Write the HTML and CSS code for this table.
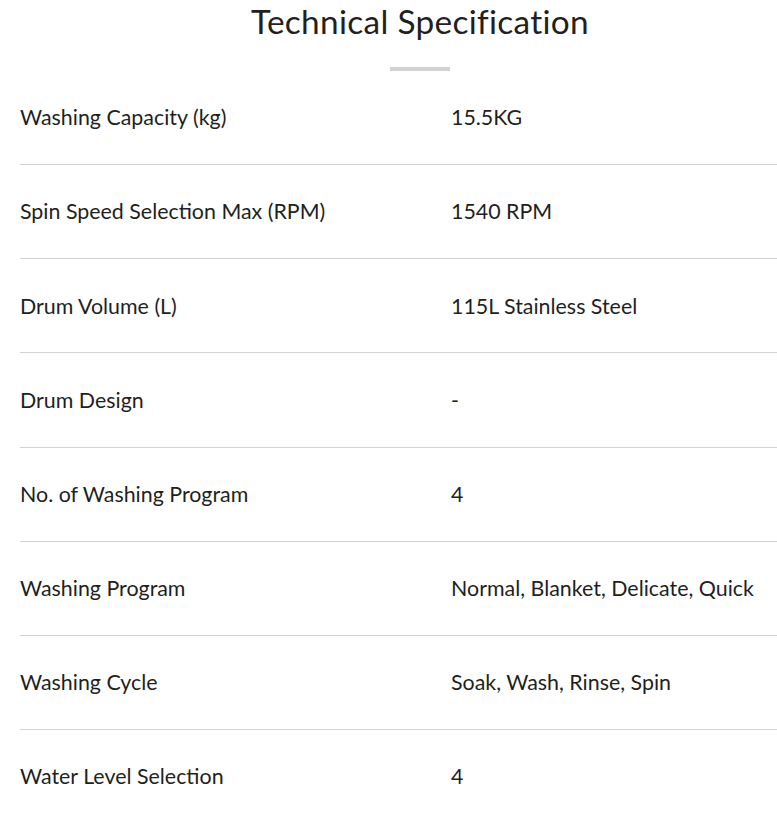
FILE: index.html
```html
<!DOCTYPE html>
<html>
<head>
<meta charset="utf-8">
<link rel="stylesheet" href="styles.css">
</head>
<body>
<section class="spec">
  <h2 class="spec-title">Technical Specification</h2>
  <div class="spec-bar"></div>
  <div class="spec-table">
    <div class="spec-row"><div class="spec-label">Washing Capacity (kg)</div><div class="spec-value">15.5KG</div></div>
    <div class="spec-row"><div class="spec-label">Spin Speed Selection Max (RPM)</div><div class="spec-value">1540 RPM</div></div>
    <div class="spec-row"><div class="spec-label">Drum Volume (L)</div><div class="spec-value">115L Stainless Steel</div></div>
    <div class="spec-row"><div class="spec-label">Drum Design</div><div class="spec-value">-</div></div>
    <div class="spec-row"><div class="spec-label">No. of Washing Program</div><div class="spec-value">4</div></div>
    <div class="spec-row"><div class="spec-label">Washing Program</div><div class="spec-value">Normal, Blanket, Delicate, Quick</div></div>
    <div class="spec-row"><div class="spec-label">Washing Cycle</div><div class="spec-value">Soak, Wash, Rinse, Spin</div></div>
    <div class="spec-row"><div class="spec-label">Water Level Selection</div><div class="spec-value">4</div></div>
  </div>
</section>
</body>
</html>
```

FILE: styles.css
```css
html, body {
  margin: 0;
  padding: 0;
  overflow: hidden;
  background: #ffffff;
}
body {
  font-family: Lato, "Noto Sans", sans-serif;
  color: #231f20;
}
.spec {
  width: 800px;
  margin-left: 20px;
  display: flex;
  flex-direction: column;
  align-items: center;
}
.spec-title {
  margin: 0;
  font-size: 33.4px;
  font-weight: 400;
  line-height: 42px;
  letter-spacing: 0.3px;
}
.spec-bar {
  width: 60px;
  height: 4px;
  background: #d2d2d2;
  margin-top: 25px;
}
.spec-table {
  align-self: stretch;
  display: flex;
  flex-direction: column;
}
.spec-row {
  display: grid;
  grid-template-columns: 431px 1fr;
  align-items: center;
  height: 93.17px;
  border-bottom: 1px solid #d3d3d3;
  font-size: 21.4px;
  font-weight: 400;
  line-height: 1.2;
}
.spec-label, .spec-value {
  padding-top: 1px;
}
.spec-row:last-child {
  border-bottom: none;
}
```
